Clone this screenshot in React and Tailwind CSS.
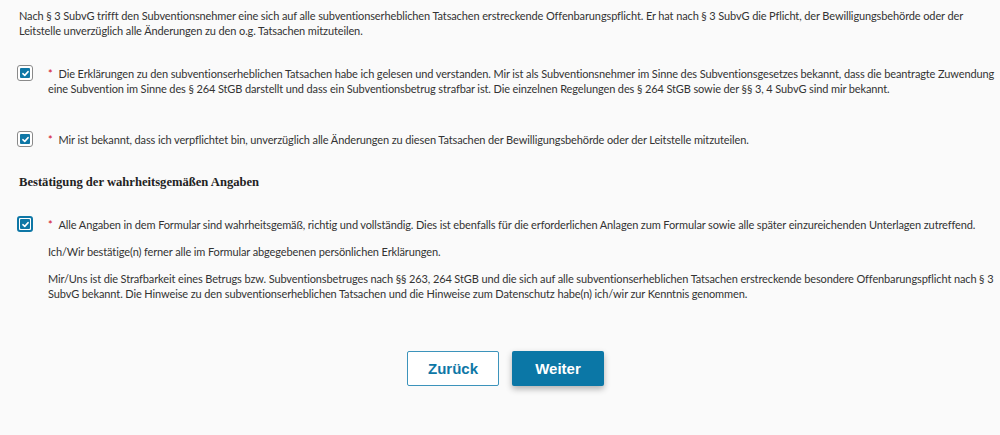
import React, { useState } from 'react';

const Check = ({ focused }) => (
  <span
    className={`-ml-[2px] mt-[-1px] flex h-[16px] w-[16px] shrink-0 items-center justify-center rounded-[3px] bg-white ${
      focused ? 'border-2 border-[#0e77a6]' : 'border border-[#8a8a8a]'
    }`}
  >
    <span className="flex h-[10px] w-[10px] items-center justify-center rounded-[1px] bg-[#0e77a6]">
      <svg viewBox="0 0 12 12" className="h-[9px] w-[9px]" fill="none" stroke="white" strokeWidth="2" strokeLinecap="round" strokeLinejoin="round">
        <path d="M2.5 6.2 L5 8.5 L9.5 3.5" />
      </svg>
    </span>
  </span>
);

const CheckRow = ({ focused, children }) => (
  <div className="flex items-start">
    <Check focused={focused} />
    <div className="ml-[15px] flex-1">{children}</div>
  </div>
);

const Star = () => <span className="mr-[6px] text-[#d0021b]">*</span>;

const App = () => {
  const [step] = useState(3);

  return (
    <div
      className="min-h-[435px] bg-[#fafafa] pl-[19px] pr-[5px] pt-[8px] text-[11px] leading-[15px] tracking-[-0.12px] text-[#333333]"
      style={{ fontFamily: 'Lato, "Noto Sans", sans-serif' }}
      data-step={step}
    >
      <p>
        Nach § 3 SubvG trifft den Subventionsnehmer eine sich auf alle subventionserheblichen Tatsachen erstreckende Offenbarungspflicht. Er hat nach § 3 SubvG die Pflicht, der Bewilligungsbehörde oder der Leitstelle unverzüglich alle Änderungen zu den o.g. Tatsachen mitzuteilen.
      </p>

      <div className="mt-[28px]">
        <CheckRow>
          <p>
            <Star />
            Die Erklärungen zu den subventionserheblichen Tatsachen habe ich gelesen und verstanden. Mir ist als Subventionsnehmer im Sinne des Subventionsgesetzes bekannt, dass die beantragte Zuwendung eine Subvention im Sinne des § 264 StGB darstellt und dass ein Subventionsbetrug strafbar ist. Die einzelnen Regelungen des § 264 StGB sowie der §§ 3, 4 SubvG sind mir bekannt.
          </p>
        </CheckRow>
      </div>

      <div className="mt-[36px]">
        <CheckRow>
          <p>
            <Star />
            Mir ist bekannt, dass ich verpflichtet bin, unverzüglich alle Änderungen zu diesen Tatsachen der Bewilligungsbehörde oder der Leitstelle mitzuteilen.
          </p>
        </CheckRow>
      </div>

      <h2
        className="mt-[26px] text-[12.6px] font-bold leading-[18px] tracking-normal text-[#222222]"
        style={{ fontFamily: '"Liberation Serif", "DejaVu Serif", serif' }}
      >
        Bestätigung der wahrheitsgemäßen Angaben
      </h2>

      <div className="mt-[26px]">
        <CheckRow focused>
          <p>
            <Star />
            Alle Angaben in dem Formular sind wahrheitsgemäß, richtig und vollständig. Dies ist ebenfalls für die erforderlichen Anlagen zum Formular sowie alle später einzureichenden Unterlagen zutreffend.
          </p>
          <p className="mt-[12px]">Ich/Wir bestätige(n) ferner alle im Formular abgegebenen persönlichen Erklärungen.</p>
          <p className="mt-[12px]">
            Mir/Uns ist die Strafbarkeit eines Betrugs bzw. Subventionsbetruges nach §§ 263, 264 StGB und die sich auf alle subventionserheblichen Tatsachen erstreckende besondere Offenbarungspflicht nach § 3 SubvG bekannt. Die Hinweise zu den subventionserheblichen Tatsachen und die Hinweise zum Datenschutz habe(n) ich/wir zur Kenntnis genommen.
          </p>
        </CheckRow>
      </div>

      <div
        className="mr-[3px] mt-[50px] flex justify-center gap-[13px] tracking-normal"
        style={{ fontFamily: '"Liberation Sans", Arial, sans-serif' }}
      >
        <button className="h-[35px] w-[92px] rounded-[2px] border border-[#3c93bb] bg-white text-[15px] font-bold text-[#0e77a6]">
          Zurück
        </button>
        <button className="h-[35px] w-[92px] rounded-[2px] bg-[#0b77a6] text-[15px] font-bold text-white shadow-[0_3px_6px_rgba(0,0,0,0.3)]">
          Weiter
        </button>
      </div>
    </div>
  );
};

export default App;
